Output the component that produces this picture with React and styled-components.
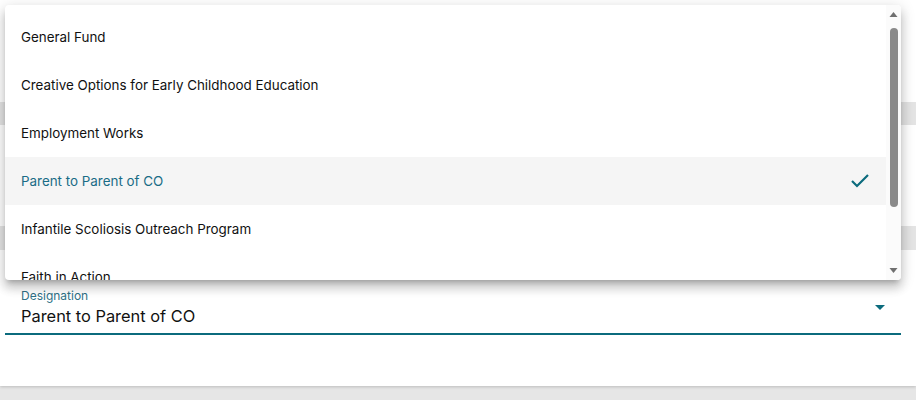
import React from "react";
import styled, { createGlobalStyle } from "styled-components";

const Global = createGlobalStyle`
  html, body { margin: 0; padding: 0; background: #e6e6e6; }
  body { font-family: "Inter", "Noto Sans", sans-serif; }
`;

const Page = styled.div`
  position: relative;
  width: 916px;
  height: 400px;
  overflow: hidden;
  background: #e6e6e6;
`;

const Card = styled.div`
  display: flex;
  flex-direction: column;
  height: 386px;
  background: #ffffff;
  box-shadow: 0 1px 3px rgba(0, 0, 0, 0.18);
`;

const Gap = styled.div`
  height: ${(p) => p.$h}px;
  flex: none;
`;

const Band = styled.div`
  height: ${(p) => p.$h}px;
  flex: none;
  background: #e4e4e4;
`;

const Field = styled.div`
  display: flex;
  flex-direction: column;
  margin: 0 15px 0 5px;
  padding: 0 16px;
  border-bottom: 2px solid #0b6b7d;
  position: relative;
  height: 49px;
  box-sizing: border-box;
`;

const Label = styled.div`
  font-size: 12px;
  color: #2f7186;
  line-height: 16px;
  margin-top: 2px;
`;

const Value = styled.div`
  font-size: 16.4px;
  color: #111;
  line-height: 22px;
  margin-top: 1px;
`;

const Arrow = styled.svg`
  position: absolute;
  right: 9px;
  top: 9px;
  width: 24px;
  height: 24px;
  fill: #0b6b7d;
`;

const Menu = styled.div`
  position: absolute;
  top: 5px;
  left: 5px;
  width: 896px;
  height: 275px;
  display: flex;
  background: #fff;
  border-radius: 4px;
  overflow: hidden;
  box-shadow: 0px 5px 5px -3px rgba(0, 0, 0, 0.2),
    0px 8px 10px 1px rgba(0, 0, 0, 0.14), 0px 3px 14px 2px rgba(0, 0, 0, 0.12);
`;

const List = styled.ul`
  flex: 1;
  margin: 0;
  padding: 8px 0;
  list-style: none;
`;

const Item = styled.li`
  display: flex;
  align-items: center;
  justify-content: space-between;
  height: 48px;
  padding: 0 16px;
  font-size: 13.4px;
  color: ${(p) => (p.$selected ? "#1a6c86" : "#111")};
  background: ${(p) => (p.$selected ? "#f5f5f5" : "transparent")};
`;

const Check = styled.svg`
  width: 20px;
  height: 20px;
  margin-right: 0;
`;

const Track = styled.div`
  width: 15px;
  flex: none;
  background: #fbfbfb;
  display: flex;
  flex-direction: column;
  align-items: center;
`;

const ArrowBtn = styled.svg`
  width: 15px;
  height: 17px;
  flex: none;
  fill: #6f6f6f;
`;

const Thumb = styled.div`
  width: 8px;
  height: 179px;
  margin-top: 6px;
  border-radius: 4px;
  background: #8a8a8a;
`;

const Filler = styled.div`
  flex: 1;
`;

const items = [
  "General Fund",
  "Creative Options for Early Childhood Education",
  "Employment Works",
  "Parent to Parent of CO",
  "Infantile Scoliosis Outreach Program",
  "Faith in Action",
];

export default function App() {
  return (
    <>
      <Global />
      <Page>
        <Card>
          <Gap $h={102} />
          <Band $h={23} />
          <Gap $h={101} />
          <Band $h={24} />
          <Gap $h={36} />
          <Field>
            <Label>Designation</Label>
            <Value>Parent to Parent of CO</Value>
            <Arrow viewBox="0 0 24 24">
              <path d="M7 10l5 5 5-5z" />
            </Arrow>
          </Field>
        </Card>
        <Menu>
          <List>
            {items.map((t) => {
              const sel = t === "Parent to Parent of CO";
              return (
                <Item key={t} $selected={sel}>
                  <span>{t}</span>
                  {sel && (
                    <Check viewBox="0 0 20 20">
                      <polyline
                        points="2,10 7,15 18,4"
                        fill="none"
                        stroke="#0b6b7d"
                        strokeWidth="2.2"
                      />
                    </Check>
                  )}
                </Item>
              );
            })}
          </List>
          <Track>
            <ArrowBtn viewBox="0 0 15 17">
              <path d="M3.5 12h8l-4-5z" />
            </ArrowBtn>
            <Thumb />
            <Filler />
            <ArrowBtn viewBox="0 0 15 17">
              <path d="M3.5 5h8l-4 5z" />
            </ArrowBtn>
          </Track>
        </Menu>
      </Page>
    </>
  );
}
